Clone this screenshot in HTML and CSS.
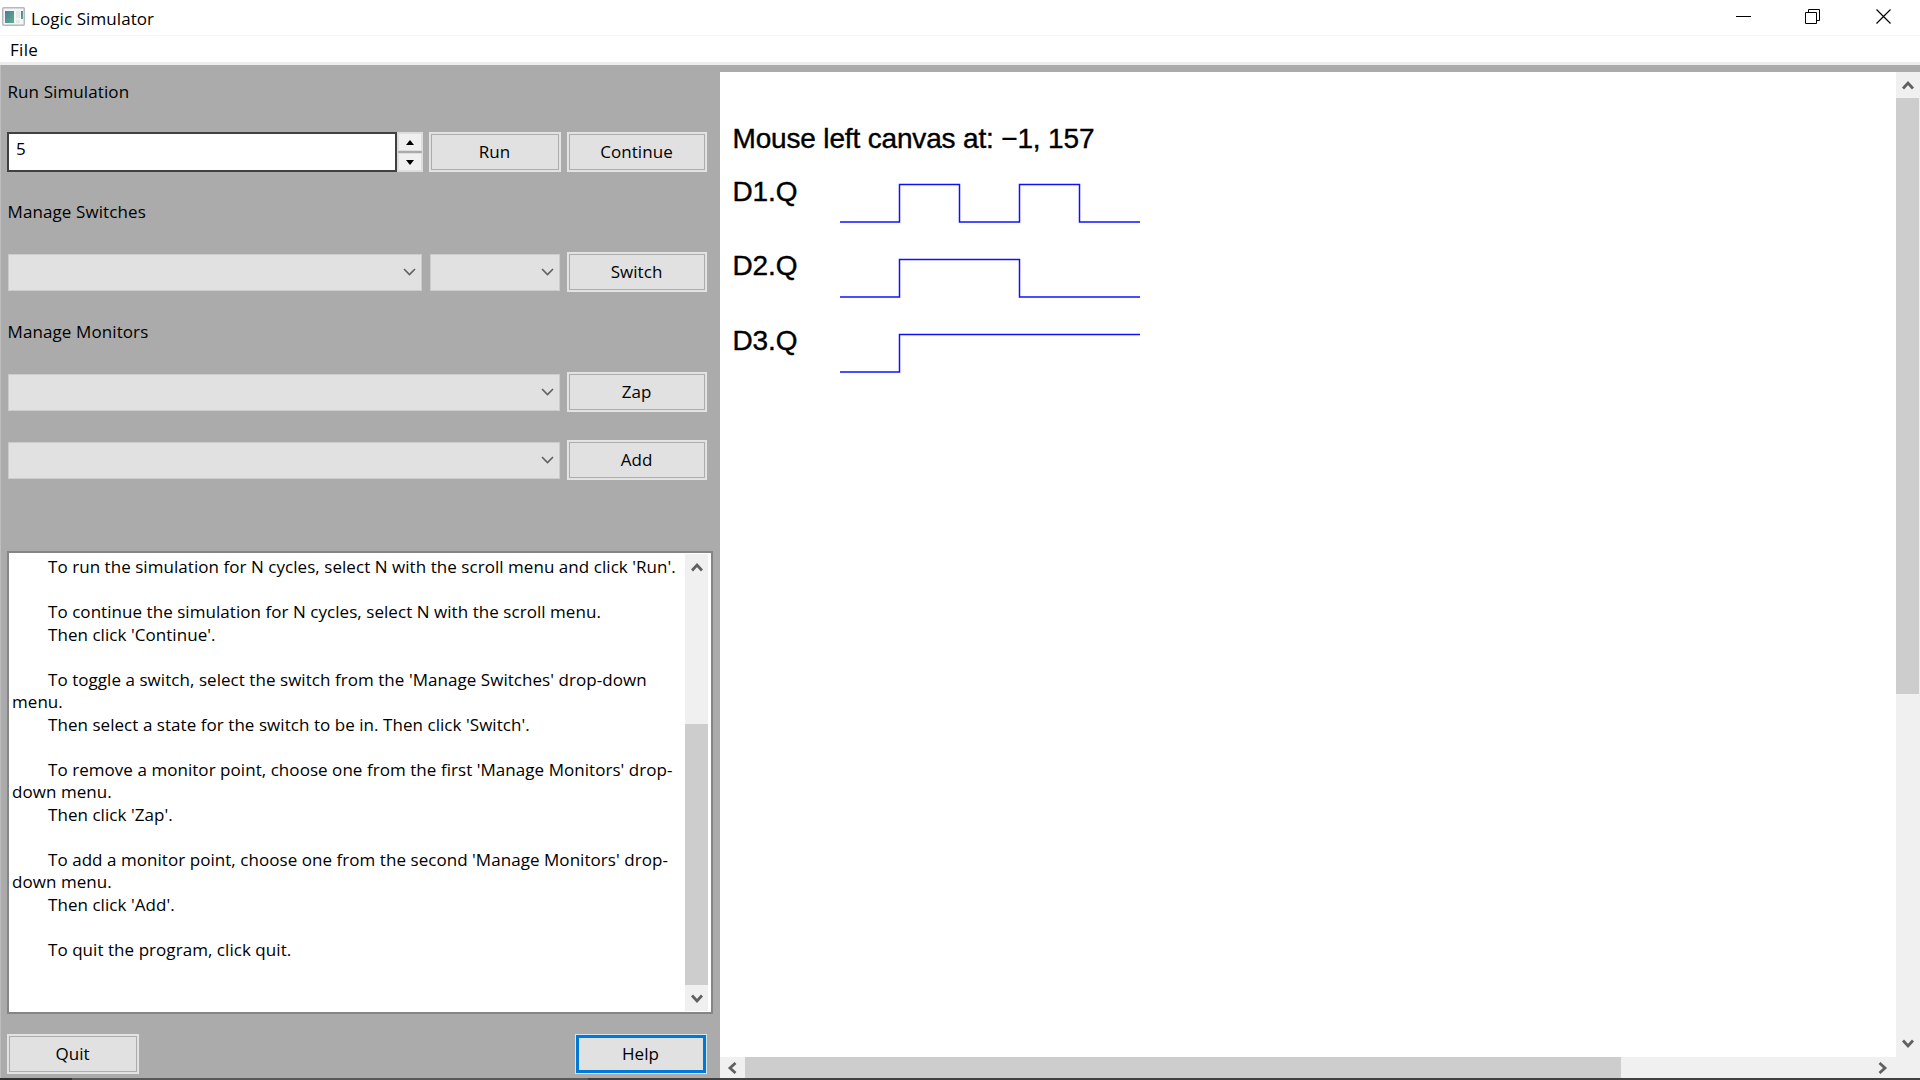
FILE: index.html
```
<!DOCTYPE html>
<html lang="en">
<head>
<meta charset="utf-8">
<title>Logic Simulator</title>
<link rel="stylesheet" href="styles.css">
</head>
<body>
<div class="window">
  <header class="titlebar">
    <svg class="app-icon" width="23" height="19" viewBox="0 0 23 19">
      <defs><linearGradient id="g" x1="0" y1="0" x2="1" y2="1"><stop offset="0" stop-color="#4a7d9c"/><stop offset="1" stop-color="#5fae86"/></linearGradient></defs>
      <rect x=".75" y=".75" width="21.5" height="17.5" rx="1" fill="#f4f5f7" stroke="#b4bac2" stroke-width="1.5"/>
      <rect x="3" y="4" width="9" height="12" fill="url(#g)"/>
      <rect x="14" y="4" width="4" height="7" fill="#e6e8ea"/>
      <rect x="19" y="4" width="2" height="8" fill="url(#g)"/>
      <rect x="14" y="13" width="4" height="3" fill="#e6e8ea"/>
    </svg>
    <span class="title">Logic Simulator</span>
    <svg class="controls" width="160" height="24" viewBox="0 0 160 24" fill="none" stroke="#000">
      <path d="M0 12.500H15"/>
      <path d="M69.500 8.500h11v11h-11zM72.500 8.500v-3h11v11h-3"/>
      <path d="M140.500 5.500l14 14M154.500 5.500l-14 14" stroke-width="1.2"/>
    </svg>
  </header>
  <nav class="menubar"><span class="file">File</span></nav>
  <main class="body">
    <section class="panel">
      <h2 class="label">Run Simulation</h2>
      <div class="row">
        <div class="spin">5</div>
        <div class="stepper">
          <span class="step"><svg width="8" height="5"><path d="M0 5L4 0L8 5z"/></svg></span>
          <span class="step"><svg width="8" height="5"><path d="M0 0L4 5L8 0z"/></svg></span>
        </div>
        <button class="btn run">Run</button>
        <button class="btn wide">Continue</button>
      </div>
      <h2 class="label">Manage Switches</h2>
      <div class="row">
        <div class="combo name"><svg class="chev" width="13" height="8"><path d="M1 1l5.500 5.500L12 1"/></svg></div>
        <div class="combo state"><svg class="chev" width="13" height="8"><path d="M1 1l5.500 5.500L12 1"/></svg></div>
        <button class="btn wide">Switch</button>
      </div>
      <h2 class="label">Manage Monitors</h2>
      <div class="row">
        <div class="combo full"><svg class="chev" width="13" height="8"><path d="M1 1l5.500 5.500L12 1"/></svg></div>
        <button class="btn wide">Zap</button>
      </div>
      <div class="row second">
        <div class="combo full"><svg class="chev" width="13" height="8"><path d="M1 1l5.500 5.500L12 1"/></svg></div>
        <button class="btn wide">Add</button>
      </div>
      <div class="help">
        <div class="help-text">
          <p class="in">To run the simulation for N cycles, select N with the scroll menu and click 'Run'.</p>
          <p></p>
          <p class="in">To continue the simulation for N cycles, select N with the scroll menu.</p>
          <p class="in">Then click 'Continue'.</p>
          <p></p>
          <p class="in">To toggle a switch, select the switch from the 'Manage Switches' drop-down</p>
          <p>menu.</p>
          <p class="in">Then select a state for the switch to be in. Then click 'Switch'.</p>
          <p></p>
          <p class="in">To remove a monitor point, choose one from the first 'Manage Monitors' drop-</p>
          <p>down menu.</p>
          <p class="in">Then click 'Zap'.</p>
          <p></p>
          <p class="in">To add a monitor point, choose one from the second 'Manage Monitors' drop-</p>
          <p>down menu.</p>
          <p class="in">Then click 'Add'.</p>
          <p></p>
          <p class="in">To quit the program, click quit.</p>
        </div>
        <div class="vbar help-bar">
          <svg class="arrow" width="12" height="10"><path d="M1 8.500l5-5.500 5 5.500"/></svg>
          <div class="thumb"></div>
          <svg class="arrow" width="12" height="10"><path d="M1 1.500l5 5.500 5-5.500"/></svg>
        </div>
      </div>
      <div class="row bottom">
        <button class="btn run">Quit</button>
        <button class="btn run focus">Help</button>
      </div>
    </section>
    <section class="view">
      <svg class="canvas" width="1176" height="985" viewBox="720 72 1176 985">
        <g class="canvas-text">
          <text x="732.500" y="147.500" textLength="362" lengthAdjust="spacing">Mouse left canvas at: −1, 157</text>
          <text x="732.500" y="201" textLength="65">D1.Q</text>
          <text x="732.500" y="274.500" textLength="65">D2.Q</text>
          <text x="732.500" y="349.500" textLength="65">D3.Q</text>
        </g>
        <g class="trace">
          <path d="M840 222H899.500V184.500H959.500V222H1019.500V184.500H1079.500V222H1140"/>
          <path d="M840 297H899.500V259.500H1019.500V297H1140"/>
          <path d="M840 372H899.500V334.500H1140"/>
        </g>
      </svg>
      <div class="vbar view-v">
        <svg class="arrow" width="12" height="10"><path d="M1 8.500l5-5.500 5 5.500"/></svg>
        <div class="thumb"></div>
        <svg class="arrow" width="12" height="10"><path d="M1 1.500l5 5.500 5-5.500"/></svg>
      </div>
      <div class="hbar">
        <svg class="arrow" width="10" height="12"><path d="M8.500 1l-5.500 5 5.500 5"/></svg>
        <div class="thumb"></div>
        <svg class="arrow" width="10" height="12"><path d="M1.500 1l5.500 5-5.500 5"/></svg>
      </div>
      <div class="corner"></div>
    </section>
  </main>
  <footer class="edge"><span class="edge-a"></span><span class="edge-b"></span></footer>
</div>
</body>
</html>
```
FILE: styles.css
```
* { box-sizing: border-box; }
body { margin: 0; background: #fff; color: #000; font-family: "Open Sans", "Noto Sans", sans-serif; font-size: 17px; letter-spacing: 0.05px; overflow: hidden; }
svg { display: block; flex: none; }
.window { width: 1920px; height: 1080px; display: flex; flex-direction: column; }
.titlebar { height: 35px; display: flex; align-items: flex-start; padding: 7px 0 0 2px; }
.title { margin-left: 6px; line-height: 23px; letter-spacing: 0.08px; }
.controls { margin: -3px 24px 0 auto; }
.menubar { height: 30px; border-top: 1px solid #f7f7f7; border-bottom: 3px solid #ededed; padding-left: 10px; }
.file { display: block; line-height: 27px; letter-spacing: 0.3px; }
.body { flex: 1; display: flex; background: #ababab; }
.panel { width: 720px; padding: 13px 13px 0 6px; border-left: 1px solid #bdbdbd; display: flex; flex-direction: column; }
.label { margin: 0; height: 54px; padding: 2px 0 0 0.5px; line-height: 24px; font-size: inherit; font-weight: 400; letter-spacing: 0.1px; }
.row { height: 40px; display: flex; align-items: center; margin-bottom: 26px; flex: none; }
.spin { width: 390px; height: 40px; background: #fff; border: 2px solid #404040; padding-left: 7px; line-height: 29px; }
.stepper { width: 26px; height: 40px; display: flex; flex-direction: column; justify-content: space-between; background: #ababab; border: 1px solid #ddd; }
.step { height: 18px; display: flex; align-items: center; justify-content: center; background: #f0f0f0; border: 1px solid #ddd; }
.btn { height: 40px; padding: 0 1px 1px 0; border: 1px solid #e4e4e4; outline: 1px solid #adadad; outline-offset: -3px; background: #e1e1e1; font: inherit; letter-spacing: inherit; color: #000; }
.run { width: 132px; margin-left: 6px; }
.wide { width: 140px; margin-left: 6px; }
.combo { height: 37px; background: #e1e1e1; border: 1px solid #ccc; display: flex; align-items: center; justify-content: flex-end; padding-right: 5px; }
.chev path { fill: none; stroke: #606060; stroke-width: 1.6; }
.name { width: 414px; margin-left: 1px; }
.state { width: 130px; margin: 0 1px 0 8px; }
.full { width: 552px; margin: 0 1px; }
.second { margin: 2px 0 71px; }
.help { width: 706px; height: 463px; flex: none; display: flex; background: #fff; border: 2px solid #858585; }
.help-text { flex: 1; min-width: 0; padding: 3px 0 0 3px; }
.help p { margin: 0; height: 22.520px; line-height: 22.520px; white-space: nowrap; }
.help .in { padding-left: 36px; }
.vbar { width: 23px; background: #f0f0f0; display: flex; flex-direction: column; align-items: center; }
.thumb { background: #cdcdcd; }
.arrow path { fill: none; stroke: #606060; stroke-width: 2.8; }
.help-bar { margin: 1px 3px 1px 0; padding: 8px 0 7px; flex: none; }
.help-bar .thumb { width: 23px; height: 261px; margin: 152px 0 9px; }
.bottom { margin: 20px 0 0; justify-content: space-between; width: 700px; }
.bottom .run { margin: 0; }
.bottom .focus { border-color: #d8e4ec; outline: 3px solid #0078d7; outline-offset: -4px; }
.view { width: 1200px; padding-top: 7px; display: grid; grid-template: 985px 21px / 1176px 24px; }
.canvas { background: #fff; }
.canvas-text { font-family: "Liberation Sans", Arial, sans-serif; font-size: 28px; letter-spacing: 0; stroke: #000; stroke-width: .4; }
.trace { fill: none; stroke: #1010ff; stroke-width: 1.5; }
.view-v { width: 24px; padding-top: 8px; }
.view-v .thumb { width: 23px; height: 596px; margin: 8px 1px 345px 0; }
.hbar { background: #f0f0f0; display: flex; align-items: center; padding-left: 7px; }
.hbar .thumb { width: 876px; height: 21px; margin: 0 257px 0 8px; }
.corner { background: #f0f0f0; }
.edge { height: 2px; background: #414141; display: flex; }
.edge-a { width: 72px; background: #303030; }
.edge-b { width: 516px; background: #585858; }
```
